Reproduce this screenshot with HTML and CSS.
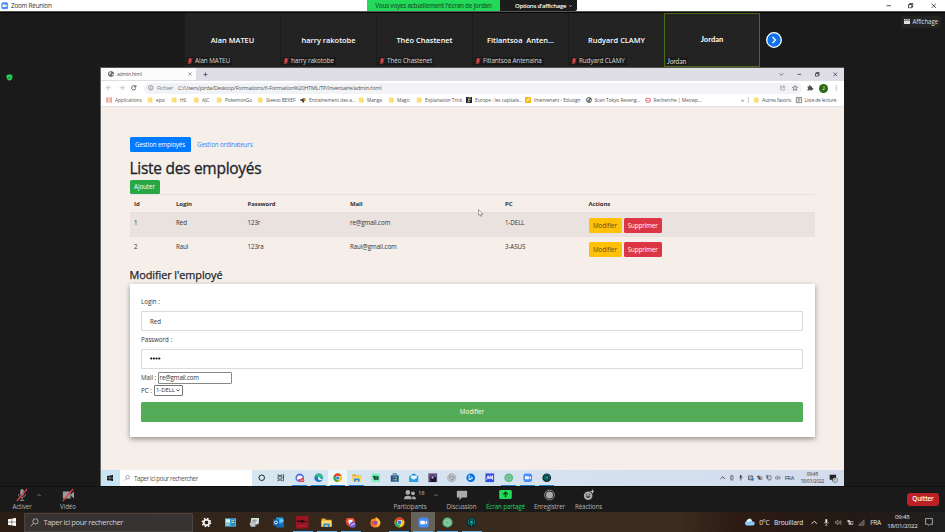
FILE: index.html
```html
<!DOCTYPE html>
<html lang="fr">
<head>
<meta charset="utf-8">
<title>Zoom Réunion</title>
<link rel="stylesheet" href="styles.css">
</head>
<body>
<svg class="defs" aria-hidden="true">
  <symbol id="muted" viewBox="0 0 10 10"><path d="M3.3 1h3.4v5H3.3zM2 5c0 3 6 3 6 0M5 7v2M3 9.3h4" fill="#d94848" stroke="#d94848"/><path d="M9 .5 1.5 9.5" stroke="#e64b4b" stroke-width="1.3"/></symbol>
  <symbol id="folder" viewBox="0 0 10 12"><path d="M.5 1h8v2h1v8H.5z" fill="#fbdf7b"/><path d="M8 3h1.5v8H8z" fill="#efcb59"/></symbol>
  <symbol id="globe" viewBox="0 0 12 12"><circle cx="6" cy="6" r="5.6" fill="#4d5156"/><path d="M2 4l3-2 2 1-1 2-2 1 1 2-1 2M8 5l3 1-2 3-2-1z" fill="#f5f5f5"/></symbol>
  <symbol id="search" viewBox="0 0 12 12"><circle cx="7.3" cy="4.5" r="3.5" fill="none" stroke="currentColor"/><path d="M4.8 7 1 11" stroke="currentColor"/></symbol>
  <symbol id="win" viewBox="0 0 12 12"><path d="M0 1.8 5.5 1v4.6H0zM6.2.9 12 0v5.6H6.2zM0 6.3h5.5v4.8L0 10.3zM6.2 6.3H12V12l-5.8-.8z" fill="currentColor"/></symbol>
  <symbol id="chrome" viewBox="0 0 24 24"><circle cx="12" cy="12" r="11" fill="#fbc116"/><path d="M2.5 6.5 7.4 15 12 7h10A11 11 0 0 0 2.5 6.5" fill="#e33b2e"/><path d="M2.5 6.5 7.7 14.7 15 16 11 23A11 11 0 0 1 2.5 6.5" fill="#2da94f"/><circle cx="12" cy="12" r="5.3" fill="#fff"/><circle cx="12" cy="12" r="4.1" fill="#2f73e0"/></symbol>
  <symbol id="explorer" viewBox="0 0 24 24"><path d="M1 3h8l2 3h12v15H1z" fill="#e9a927"/><path d="M1 8h22v13H1z" fill="#ffd968"/><path d="M5 14h14v8h-4v-4H9v4H5z" fill="#2b8fda"/></symbol>
  <symbol id="zoomapp" viewBox="0 0 24 24"><rect x="1" y="1" width="22" height="22" rx="6" fill="#4a8cff"/><path d="M5 8h8q2 0 2 2v6H7q-2 0-2-2zM16 11l4-3v8l-4-3z" fill="#fff"/></symbol>
  <symbol id="atom" viewBox="0 0 24 24"><circle cx="12" cy="12" r="11" fill="#55b47d"/><g fill="none" stroke="#a9dcbc" stroke-width="1"><ellipse cx="12" cy="12" rx="8.5" ry="3.5" transform="rotate(20 12 12)"/><ellipse cx="12" cy="12" rx="8.5" ry="3.5" transform="rotate(80 12 12)"/><ellipse cx="12" cy="12" rx="8.5" ry="3.5" transform="rotate(140 12 12)"/></g></symbol>
  <symbol id="kraken" viewBox="0 0 24 24"><circle cx="12" cy="12" r="11" fill="#0a2a30"/><path d="M6 16C3 7 8 4 12 4s9 3 6 12M9 17v-4M15 17v-4M12 20v-8" fill="none" stroke="#20a3a0" stroke-width="1.5"/><path d="M9 8h6v5H9z" fill="#20a3a0"/></symbol>
  <symbol id="mic" viewBox="0 0 12 14"><rect x="4" y="0" width="4" height="8" rx="2" fill="currentColor"/><path d="M2 6c0 5 8 5 8 0M6 10v3M3.5 13.3h5" fill="none" stroke="currentColor"/></symbol>
  <symbol id="sound" viewBox="0 0 14 12"><path d="M1 4h2l3-3v10L3 8H1z" fill="none" stroke="currentColor"/><path d="M8 4q1.5 2 0 4M10 2.5q3 3.500 0 7M12 1q4 5 0 10" fill="none" stroke="currentColor"/></symbol>
  <symbol id="up" viewBox="0 0 10 6"><path d="M1 5l4-4 4 4" fill="none" stroke="currentColor" stroke-width="1.5"/></symbol>
  <symbol id="restore" viewBox="0 0 10 10"><path d="M1 3h6v6H1zM3 3V1h6v6H7" fill="none" stroke="currentColor" stroke-width="1.5"/></symbol>
  <symbol id="close" viewBox="0 0 10 10"><path d="M1 1l8 8M9 1 1 9" stroke="currentColor" stroke-width="1.4"/></symbol>
  <symbol id="min" viewBox="0 0 10 10"><path d="M1 5h8" stroke="currentColor" stroke-width="1.4"/></symbol>
  <symbol id="battery" viewBox="0 0 14 12"><path d="M4 4h9v6H4z" fill="none" stroke="currentColor" stroke-width="1.3"/><path d="M1 1h5v4H1zM5 6h4v3H5z" fill="currentColor"/></symbol>
</svg>

<header class="titlebar">
  <svg class="app-logo"><use href="#zoomapp"/></svg>
  <span class="app-name">Zoom Réunion</span>
  <div class="share-note">Vous voyez actuellement l'écran de Jordan</div>
  <div class="share-options"><span>Options d'affichage</span><svg class="chev" viewBox="0 0 10 6"><path d="M1 1l4 4 4-4" fill="none" stroke="#fff" stroke-width="2"/></svg></div>
  <div class="win-controls"><svg><use href="#min"/></svg><svg><use href="#restore"/></svg><svg><use href="#close"/></svg></div>
</header>

<section class="gallery">
  <div class="tile"><b>Alan MATEU</b><span class="tag"><svg><use href="#muted"/></svg>Alan MATEU</span></div>
  <div class="tile"><b>harry rakotobe</b><span class="tag"><svg><use href="#muted"/></svg>harry rakotobe</span></div>
  <div class="tile"><b>Théo Chastenet</b><span class="tag"><svg><use href="#muted"/></svg>Théo Chastenet</span></div>
  <div class="tile"><b>Fitiantsoa&nbsp; Anten...</b><span class="tag"><svg><use href="#muted"/></svg>Fitiantsoa Antenaina</span></div>
  <div class="tile"><b>Rudyard CLAMY</b><span class="tag"><svg><use href="#muted"/></svg>Rudyard CLAMY</span></div>
  <div class="tile active"><b>Jordan</b><span class="tag">Jordan</span></div>
  <svg class="next" viewBox="0 0 16 16"><circle cx="8" cy="8" r="7.3" fill="#0e72ed" stroke="#fff" stroke-width="1.3"/><path d="M6.5 5 9.5 8l-3 3" fill="none" stroke="#fff" stroke-width="1.2"/></svg>
  <div class="view-btn"><svg viewBox="0 0 12 10"><path d="M0 0h3v2H0zM4.5 0h3v2h-3zM9 0h3v2H9zM0 3h12v7H0z" fill="#ddd"/></svg>Affichage</div>
</section>

<main class="stage">
  <aside class="left"><svg viewBox="0 0 12 12"><path d="M6 .5 11 2.300v4Q10.500 10 6 11.700 1.500 10 1 6.300v-4z" fill="#23d959"/><path d="M3.5 6l2 2 3.300-3.800" fill="none" stroke="#163c20" stroke-width="1.3"/></svg></aside>
  <div class="desktop">
    <div class="tabs">
      <div class="tab"><svg><use href="#globe"/></svg><span>admin.html</span><svg class="x"><use href="#close"/></svg></div>
      <svg class="plus" viewBox="0 0 10 10"><path d="M5 1v8M1 5h8" stroke="#444" stroke-width="1.5"/></svg>
      <div class="tab-controls"><svg viewBox="0 0 10 10"><path d="M1 3l4 4 4-4" fill="none" stroke="#333" stroke-width="1.4"/></svg><svg><use href="#min"/></svg><svg><use href="#restore"/></svg><svg><use href="#close"/></svg></div>
    </div>
    <div class="toolbar">
      <svg class="nav" viewBox="0 0 12 12"><path d="M11 6H1M6 1 1 6l5 5" fill="none" stroke="#999" stroke-width="1.3"/></svg>
      <svg class="nav" viewBox="0 0 12 12"><path d="M1 6h10M6 1l5 5-5 5" fill="none" stroke="#999" stroke-width="1.3"/></svg>
      <svg class="nav" viewBox="0 0 12 12"><path d="M10.5 7A4.700 4.700 0 1 1 9 2.500L10 4M10.700.5V4.500H7" fill="none" stroke="#333" stroke-width="1.6"/></svg>
      <div class="url"><svg class="info" viewBox="0 0 12 12"><circle cx="6" cy="6" r="5" fill="none" stroke="#555" stroke-width="1.2"/><path d="M6 5v4M6 2.800V4" stroke="#555" stroke-width="1.3"/></svg><span class="file">Fichier</span><span class="path">C:/Users/jorda/Desktop/Formations/6-Formation%20HTML/TP/Inventaire/admin.html</span>
        <svg class="share" viewBox="0 0 12 12"><path d="M4 2H1.500v9H10V8M4 7q0-4 4-4V1l3 3-3 3V5" fill="none" stroke="#666"/></svg>
        <svg class="star" viewBox="0 0 12 12"><path d="M6 1l1.500 3.400 3.700.3-2.800 2.500.8 3.700L6 9l-3.200 1.900.8-3.700L.8 4.700l3.700-.3z" fill="none" stroke="#444" stroke-width="1.2"/></svg>
      </div>
      <svg class="puzzle" viewBox="0 0 12 12"><path d="M1 3h3a1.700 1.700 0 1 1 3 0h3v3a1.700 1.700 0 1 1 0 3v2H7a1.500 1.500 0 0 0-3 0H1V8a1.500 1.500 0 0 0 0-3z" fill="#4b4f53"/></svg>
      <span class="avatar">J</span>
      <svg class="dots" viewBox="0 0 4 12"><path d="M1.200 1h1.600v1.600H1.200zM1.200 5.200h1.600v1.600H1.200zM1.200 9.400h1.600V11H1.200z" fill="#555"/></svg>
    </div>
    <div class="bookmarks">
      <span class="bm w1"><svg viewBox="0 0 12 12"><path d="M1 1h2.500v10H1z" fill="#e94b3d"/><path d="M5 1h2.500v10H5z" fill="#eda430"/><path d="M9 1h2.500v10H9z" fill="#d95149"/><path d="M0 4h12M0 8h12" stroke="#fff"/></svg>Applications</span>
      <span class="bm w2"><svg><use href="#folder"/></svg>epsi</span>
      <span class="bm w3"><svg><use href="#folder"/></svg>HS</span>
      <span class="bm w4"><svg><use href="#folder"/></svg>AJC</span>
      <span class="bm w5"><svg><use href="#folder"/></svg>PokemonGo</span>
      <span class="bm w6"><svg><use href="#folder"/></svg>Steevo BEKEF</span>
      <span class="bm w7"><svg viewBox="0 0 12 12"><path d="M0 5l5-1 2-2 3 1 2 3-3 1-1 4H5L4 8 0 7z" fill="#493d27"/><path d="M7 4h4v3H7z" fill="#e6ad2b"/></svg>Entraînement des a...</span>
      <span class="bm w8"><svg><use href="#folder"/></svg>Manga</span>
      <span class="bm w9"><svg><use href="#folder"/></svg>Magic</span>
      <span class="bm w10"><svg><use href="#folder"/></svg>Explanation Trick</span>
      <span class="bm w11"><svg viewBox="0 0 12 12"><path d="M0 0h12v12H0z" fill="#182744"/><path d="M10 1Q3 1 5 5t0 6M10 5H4M8 9H3" fill="none" stroke="#d8bd62" stroke-width="1.5"/></svg>Europe : les capitale...</span>
      <span class="bm w12"><svg viewBox="0 0 12 12"><rect width="12" height="12" rx="1" fill="#f8b817"/><path d="M3 9l1-3 4-4 1 2-4 4z" fill="#fff"/></svg>Intervenant - Edusign</span>
      <span class="bm w13"><svg><use href="#globe"/></svg>Scan Tokyo Reveng...</span>
      <span class="bm w14"><svg viewBox="0 0 12 12"><path d="M2 4l1-2 2 1h2l2-1 1 2 1 3q-1 4-5 4T1 7z" fill="#fff" stroke="#e33c46" stroke-width="1.6"/><path d="M3 7h6" stroke="#e33c46"/></svg>Recherche | Meowp...</span>
      <span class="more">»</span>
      <span class="bm w15"><svg><use href="#folder"/></svg>Autres favoris</span>
      <span class="bm w16"><svg viewBox="0 0 12 12"><path d="M.7.7h10.600v10.600H.7zM3 3.500h6M3 6h6M3 8.500h4" fill="none" stroke="#555" stroke-width="1.3"/></svg>Liste de lecture</span>
    </div>

    <div class="page">
      <nav><a class="pill">Gestion employés</a><a class="link">Gestion ordinateurs</a></nav>
      <h1>Liste des employés</h1>
      <button class="btn add">Ajouter</button>
      <table>
        <thead><tr><th class="c1">Id</th><th class="c2">Login</th><th class="c3">Password</th><th class="c4">Mail</th><th class="c5">PC</th><th>Actions</th></tr></thead>
        <tbody>
          <tr><td>1</td><td>Red</td><td>123r</td><td>re@gmail.com</td><td>1-DELL</td><td><div class="acts"><button class="btn edit">Modifier</button><button class="btn del">Supprimer</button></div></td></tr>
          <tr><td>2</td><td>Raul</td><td>123ra</td><td>Raul@gmail.com</td><td>3-ASUS</td><td><div class="acts"><button class="btn edit">Modifier</button><button class="btn del">Supprimer</button></div></td></tr>
        </tbody>
      </table>
      <h2>Modifier l'employé</h2>
      <form class="card">
        <label>Login :</label>
        <div class="field">Red</div>
        <label>Password :</label>
        <div class="field pw"><svg viewBox="0 0 11 3"><circle cx="1.2" cy="1.500" r="1.100"/><circle cx="3.900" cy="1.500" r="1.100"/><circle cx="6.600" cy="1.500" r="1.100"/><circle cx="9.300" cy="1.500" r="1.100"/></svg></div>
        <div class="line mail"><span>Mail :</span><div class="mini">re@gmail.com</div></div>
        <div class="line pc"><span>PC :</span><div class="select">1-DELL<svg viewBox="0 0 10 6"><path d="M1 1l4 4 4-4" fill="none" stroke="#222" stroke-width="2"/></svg></div></div>
        <div class="submit">Modifier</div>
      </form>
      <svg class="cursor" viewBox="0 0 10 16"><path d="M1 1v12l3-3 2 5 2-1-2-4h3.500z" fill="#fff" stroke="#555"/></svg>
    </div>

    <div class="taskbar inner">
      <div class="start"><svg><use href="#win"/></svg></div>
      <div class="find"><svg><use href="#search"/></svg>Taper ici pour rechercher</div>
      <div class="icons">
        <i><svg viewBox="0 0 24 24"><circle cx="12" cy="12" r="7" fill="none" stroke="#222" stroke-width="2.5"/></svg></i>
        <i><svg viewBox="0 0 24 24"><path d="M5 3v3h10V3M5 21v-3h10v3M5 9h10v6H5zM19 3v18M17 10h4" fill="none" stroke="#333" stroke-width="1.8"/></svg></i>
        <i class="on"><svg viewBox="0 0 24 24"><circle cx="12" cy="12" r="11" fill="#6571d8"/><path d="M5 16q0-9 4-9h6q4 0 4 9l-4 1-1-2h-4l-1 2z" fill="#fff"/><circle cx="18" cy="18" r="5.5" fill="#ef4050"/><circle cx="18" cy="18" r="1.7" fill="#fff"/></svg></i>
        <i class="on"><svg viewBox="0 0 24 24"><circle cx="12" cy="12" r="11" fill="#1a77c9"/><path d="M2 8Q8-2 18 3q6 4 5 11H11q0-6-9-6" fill="#35bd91"/><path d="M10 11q4-3 6 3 3 3 7-1-1 6-9 5-5-1-4-7" fill="#e1f5fa"/></svg></i>
        <i class="on sel"><svg><use href="#chrome"/></svg></i>
        <i class="on"><svg><use href="#explorer"/></svg></i>
        <i><svg viewBox="0 0 24 24"><rect x="1" y="1" width="22" height="22" rx="4" fill="#7df0c0"/><path d="M4 8l4-2 2 2h9v9H7v-5z" fill="#173c32"/><circle cx="13" cy="12.500" r="1.500" fill="#7df0c0"/></svg></i>
        <i><svg viewBox="0 0 24 24"><path d="M2 6h20v16H2z" fill="#16548b"/><path d="M8 6V2h8v4" fill="none" stroke="#16548b" stroke-width="2"/><path d="M7 9h4v4H7z" fill="#ef6b4d"/><path d="M13 9h4v4h-4z" fill="#8cc757"/><path d="M7 15h4v4H7z" fill="#43b5ed"/><path d="M13 15h4v4h-4z" fill="#f5c84a"/></svg></i>
        <i><svg viewBox="0 0 24 24"><path d="M1 8 12 1l11 7v14H1z" fill="#1079c4"/><path d="M4 6h16v7l-8 5-8-5z" fill="#e8f5ff"/><path d="M1 10l11 7 11-7v12H1z" fill="#27a2e5"/></svg></i>
        <i><svg viewBox="0 0 24 24"><path d="M1 1h22v22H1z" fill="#5b4878"/><path d="M4 23l2-12 5-6 4 5 6 1-2 12z" fill="#19162c"/><path d="M10 7l5 3-2 5-5-2z" fill="#a59cc6"/><path d="M3 3l4 4M16 3l5 7M3 15l4 6" stroke="#9165ad" stroke-width="2"/></svg></i>
        <i><svg viewBox="0 0 24 24"><circle cx="12" cy="12" r="10.5" fill="#c0c3ca" stroke="#848995"/><path d="M5 8l5-3 5 4 5-1-3 9-6 2-4-5z" fill="#9a9da6"/><path d="M9 9l5 3-3 4z" fill="#eee"/></svg></i>
        <i><svg viewBox="0 0 24 24"><circle cx="12" cy="12" r="11" fill="#0873dc"/><path d="M8 5v12l9-4-5-4M8 17l5-3" fill="none" stroke="#fff" stroke-width="2.3"/></svg></i>
        <i><svg viewBox="0 0 24 24"><path d="M1 1h22v22H1z" fill="#394ee5"/><path d="M4 17 8 7l2 8 4-8 1 8 4-8v10" fill="none" stroke="#fff" stroke-width="2.2"/></svg></i>
        <i class="on"><svg><use href="#atom"/></svg></i>
        <i class="on"><svg><use href="#zoomapp"/></svg></i>
        <i class="on"><svg><use href="#kraken"/></svg></i>
      </div>
      <div class="tray">
        <svg><use href="#up"/></svg>
        <svg viewBox="0 0 12 12"><path d="M3 3h6v6H3zM3 1h6M3 11h6M6 5v3" fill="none" stroke="#333"/></svg>
        <svg><use href="#mic"/></svg>
        <svg viewBox="0 0 12 12"><path d="M1 2h9v8H1zM3 8l5-5" fill="none" stroke="#333" stroke-width="1.4"/><path d="M7 7h5v5H7z" fill="#2673c9"/></svg>
        <svg><use href="#battery"/></svg>
        <svg viewBox="0 0 12 12"><path d="M3 2h8v7H3zM1 1h3v5H1zM5 11h5" fill="none" stroke="#333"/></svg>
        <svg><use href="#sound"/></svg>
        <span class="fra">FRA</span>
        <div class="clock"><span>09:45</span><span>18/01/2022</span></div>
        <svg class="notif" viewBox="0 0 14 14"><path d="M1 1h10v8H7l-2 3V9H1z" fill="#222"/><circle cx="9.5" cy="9.500" r="3.800" fill="#e8edf5" stroke="#555"/><path d="M9.500 7.500v4M8.500 8.500l1-1" stroke="#333"/></svg>
      </div>
    </div>
  </div>
</main>

<footer class="zoombar">
  <div class="tool t1"><svg viewBox="0 0 14 14"><g transform="translate(1)" color="#9a9a9a"><use href="#mic" width="12" height="14"/></g><path d="M13 0 1 14" stroke="#e23b40" stroke-width="1.4"/></svg><span>Activer</span></div>
  <svg class="caret"><use href="#up"/></svg>
  <div class="tool t2"><svg viewBox="0 0 14 14"><path d="M1 3h8q1 0 1 1v7H1zM10.500 6 14 3v8l-3.500-3z" fill="#9a9a9a"/><path d="M13 0 1 14" stroke="#e23b40" stroke-width="1.4"/></svg><span>Vidéo</span></div>
  <div class="tool t3"><svg viewBox="0 0 14 14"><circle cx="4.5" cy="4" r="2.700" fill="#aaa"/><circle cx="10.500" cy="5" r="2.200" fill="#aaa"/><path d="M0 12q0-4 4.500-4T9 12zM9 9q5-1.500 5 3h-4z" fill="#aaa"/></svg><em>18</em><span>Participants</span></div>
  <svg class="caret c2"><use href="#up"/></svg>
  <div class="tool t4"><svg viewBox="0 0 14 14"><path d="M2 2h10q1 0 1 1v6q0 1-1 1H7l-3 3v-3H2q-1 0-1-1V3q0-1 1-1" fill="#aaa"/></svg><span>Discussion</span></div>
  <div class="tool t5"><svg viewBox="0 0 14 10"><rect width="14" height="10" rx="1.5" fill="#23d959"/><path d="M7 8V3M4.500 5 7 2.500 9.500 5" fill="none" stroke="#173d20" stroke-width="1.5"/></svg><span>Écran partagé</span></div>
  <div class="tool t6"><svg viewBox="0 0 14 14"><circle cx="7" cy="7" r="6.2" fill="none" stroke="#aaa"/><circle cx="7" cy="7" r="4.5" fill="#aaa"/></svg><span>Enregistrer</span></div>
  <div class="tool t7"><svg viewBox="0 0 14 14"><circle cx="6.5" cy="8" r="5.500" fill="#aaa"/><path d="M4 8.500q2.500 4 5 0zM4.500 5.500v1.500M8.500 5.500v1.500" fill="none" stroke="#222"/><path d="M12 0v5M9.500 2.500h4.500" stroke="#bbb" stroke-width="1.3"/></svg><span>Réactions</span></div>
  <div class="quit">Quitter</div>
</footer>

<div class="taskbar outer">
  <div class="start"><svg><use href="#win"/></svg></div>
  <div class="find"><svg><use href="#search"/></svg>Taper ici pour rechercher</div>
  <div class="icons">
    <i><svg viewBox="0 0 24 24"><circle cx="12" cy="12" r="6" fill="none" stroke="#fff" stroke-width="3.5"/><circle cx="12" cy="12" r="9" fill="none" stroke="#fff" stroke-width="3" stroke-dasharray="3.6 3.470"/></svg></i>
    <i><svg viewBox="0 0 24 24"><path d="M0 3h24v18H0z" fill="#55b8e7"/><path d="M2 5h9v7H2z" fill="#d8f0fa"/><path d="M12 5h10v14H12z" fill="#2387c4"/><path d="M14 8h6M14 12h6M3 16h7" stroke="#f4dd66" stroke-width="2"/></svg></i>
    <i><svg viewBox="0 0 24 24"><path d="M5 2h17l-1 14H3z" fill="#dbe3e5"/><path d="M1 13h13v8H4z" fill="#bdc7ca"/><path d="M7 7h10M6 11h9M14 20l6-6" stroke="#67777c" stroke-width="2"/></svg></i>
    <i><svg viewBox="0 0 24 24"><path d="M7 1h15v17H7z" fill="#27a2df"/><path d="M14 5h9v6h-9z" fill="#67c5ef"/><path d="M9 12l7 4 8-5v12H7z" fill="#1768ac"/><path d="M0 5h13v14H0z" fill="#0c61b2"/><circle cx="6.5" cy="12" r="3.200" fill="none" stroke="#fff" stroke-width="2"/></svg></i>
    <i class="on"><svg class="big" viewBox="0 0 24 24"><path d="M0 0h24v24H0z" fill="#981523"/><path d="M1 8l7 1 4-2 5 3 6 1-7 1-4 1-4-2-4 1z" fill="#210c11"/><path d="M3 19h16" stroke="#bb2732" stroke-width="2"/></svg></i>
    <i class="on"><svg><use href="#explorer"/></svg></i>
    <i class="on"><svg viewBox="0 0 24 24"><path d="M4 2h14l4 6-2 9-8 6-8-6L1 8z" fill="#eb4a31"/><path d="M7 6h10l-2 7-3 5-4-5z" fill="#fff"/><circle cx="17" cy="17" r="6.5" fill="#7660d7"/><path d="M13 18l8-4" stroke="#ead8ff" stroke-width="2"/></svg></i>
    <i><svg viewBox="0 0 24 24"><path d="M4 5q2-4 3 0 6-3 6-5 9 5 10 12 0 11-11 11T1 12q0-4 3-7" fill="#ff8425"/><path d="M14 1q8 5 8 12-2 7-8 7 5-8-1-13z" fill="#ffca3c"/><circle cx="12" cy="12.500" r="4.500" fill="#8b46cd"/><path d="M3 10q5-2 8 1l-3 3q-1 3 3 5-8 1-8-9" fill="#f64b36"/></svg></i>
    <i class="on"><svg><use href="#chrome"/></svg></i>
    <i class="on sel"><svg><use href="#zoomapp"/></svg></i>
    <i class="on"><svg><use href="#atom"/></svg></i>
    <i class="on"><svg><use href="#kraken"/></svg></i>
  </div>
  <div class="weather"><svg viewBox="0 0 14 10"><path d="M3 9.500a3 3 0 0 1 0-5.500Q5 0 8 1q2 1 2 3 4 0 3.500 3.500-.5 2-2.500 2z" fill="#8cc9f2"/><path d="M3 4q2-4 5-3 2 1 2 3-3-1-4 1-2-1-3-1" fill="#e8f6ff"/></svg><span>0°C</span><span>Brouillard</span></div>
  <div class="tray">
    <svg><use href="#up"/></svg><svg><use href="#mic"/></svg><svg><use href="#sound"/></svg><svg><use href="#battery"/></svg>
    <svg viewBox="0 0 12 12"><path d="M11 1v10H1zM4 11q0-4 7-6M7 11q0-2 4-3" fill="none" stroke="#aaa"/></svg>
    <span class="fra">FRA</span>
    <div class="clock"><span>09:45</span><span>18/01/2022</span></div>
    <svg class="notif" viewBox="0 0 14 14"><path d="M1 1h12v10H9l-2 2-2-2H1z" fill="none" stroke="#ddd" stroke-width="1.2"/></svg>
  </div>
</div>
</body>
</html>
```
FILE: styles.css
```css
* { box-sizing: border-box; }
body { margin: 0; width: 945px; height: 532px; overflow: hidden; display: flex; flex-direction: column; background: #1a1a1a; font-family: "Open Sans", "Noto Sans", sans-serif; font-size: 6.2px; color: #222; }
svg { display: block; flex: none; overflow: visible; }
.defs { width: 0; height: 0; position: absolute; }
span, b, a { white-space: nowrap; }

.titlebar { flex: none; height: 12px; background: #fff; border-bottom: 1px solid #555; display: grid; grid-template-columns: 11px 356px 133px 77px 1fr; align-items: center; }
.app-logo { width: 7.5px; height: 7.5px; margin-left: 1px; }
.app-name { font-size: 6.4px; letter-spacing: -.26px; color: #333; }
.share-note { height: 11px; line-height: 11px; background: #23d959; color: #17612d; font-size: 6.2px; font-weight: 600; letter-spacing: -.24px; text-align: center; white-space: nowrap; }
.share-options { height: 11px; display: flex; gap: 3px; align-items: center; padding-left: 15px; background: #1c1c1c; color: #fff; font-weight: 600; font-size: 6px; letter-spacing: -.26px; border-radius: 0 0 2px 0; }
.chev { width: 3px; height: 2px; }
.win-controls { display: flex; justify-content: flex-end; gap: 17px; padding-right: 9px; }
.win-controls svg { width: 5.5px; height: 5.5px; }

.gallery { flex: none; height: 55px; border-top: 1px solid #050505; padding-left: 185px; display: flex; background: #1a1a1a; }
.tile { width: 96px; height: 54px; background: #232323; border-right: 1px solid #1b1b1b; display: grid; place-items: center; position: relative; color: #fff; padding-bottom: 1px; }
.tile b { font-size: 7.4px; font-weight: 600; letter-spacing: .02px; }
.tile.active { margin-left: -1px; border: 1px solid #4b6b14; }
.tile.active b { font-family: Lato, sans-serif; font-weight: 700; font-size: 7.5px; }
.tag { position: absolute; left: 1px; bottom: 1.5px; height: 8.5px; line-height: 8.5px; display: flex; align-items: center; gap: 2px; padding: 0 2px 0 1px; font-size: 6.3px; letter-spacing: -.07px; color: #d8d8d8; background: #1b1b1b; }
.active .tag { bottom: 1px; font-family: Lato, sans-serif; font-size: 6.7px; }
.tag svg { width: 6px; height: 6px; }
.next { width: 16px; height: 16px; margin: 18.5px 0 0 6px; }
.view-btn { margin: 2.5px 4px 0 auto; height: 12px; padding: 0 3px; background: #242424; border-radius: 3px; display: flex; gap: 2px; align-items: center; font-size: 6.2px; letter-spacing: -.12px; color: #ddd; }
.view-btn svg { width: 6px; height: 5px; }

.stage { flex: none; height: 419px; display: flex; }
.left { width: 101px; padding: 7px 0 0 6px; border-right: 1px solid #666; }
.left svg { width: 7px; height: 7px; }
.desktop { width: 743px; display: flex; flex-direction: column; background: #fff; border-top: 1px solid #555; }
.tabs { height: 13px; background: #dfdee6; display: flex; align-items: center; padding-bottom: 1px; }
.tab { width: 95px; height: 12px; padding: 0 4px 0 7px; background: #fcfcfd; display: flex; gap: 3px; align-items: center; font-size: 5px; letter-spacing: -.2px; color: #555; }
.tab svg { width: 6px; height: 6px; }
.tab .x { width: 4px; height: 4px; margin-left: auto; }
.plus { width: 5px; height: 5px; margin-left: 6.5px; }
.tab-controls { margin-left: auto; display: flex; gap: 13.2px; padding-right: 6.5px; }
.tab-controls svg { width: 4.7px; height: 4.7px; }
.toolbar { height: 14px; display: flex; align-items: center; padding-left: 5px; background: #fff; }
.nav { width: 5.5px; height: 5.5px; margin-right: 7px; }
.url { width: 658.5px; height: 11px; border-radius: 6px; background: #f2f3f6; display: flex; align-items: center; padding-left: 4px; font-size: 5.5px; color: #555; }
.info { width: 5.5px; height: 5.5px; margin-right: 4px; }
.file { width: 21px; letter-spacing: -.1px; color: #777; }
.path { letter-spacing: -.195px; }
.share { width: 5.5px; height: 5.5px; margin-left: auto; }
.star { width: 6px; height: 6px; margin: 0 4px 0 7px; }
.puzzle { width: 6px; height: 6px; margin-left: 5px; }
.avatar { width: 9px; height: 9px; text-align: center; color: #fff; background: #286b18; border-radius: 50%; margin-left: 6px; font: 5px/9px Lato, sans-serif; }
.dots { width: 2.5px; height: 6px; margin-left: 7px; }
.bookmarks { height: 12px; display: flex; align-items: center; padding: 0 0 1px 5px; border-bottom: 1px solid #e4e1e2; font-size: 4.8px; letter-spacing: -.06px; color: #555; }
.bm { display: flex; align-items: center; gap: 3px; flex: none; }
.bm svg { width: 6px; height: 6px; }
.w1 { width: 41px; } .w2 { width: 24px; } .w3 { width: 22px; } .w4 { width: 23px; } .w5 { width: 41px; } .w6 { width: 43px; } .w7 { width: 58px; }
.w8 { width: 30px; } .w9 { width: 28px; } .w10 { width: 50px; } .w11 { width: 59px; } .w12 { width: 60.5px; } .w13 { width: 59px; } .w14 { width: 96.5px; }
.w7, .w11, .w13, .w14 { letter-spacing: -.04px; }
.more { width: 7px; font-size: 6px; }
.w15 { width: 47.5px; padding-left: 4px; border-left: 1px solid #ccc; letter-spacing: -.12px; }
.w16 { letter-spacing: -.14px; }

.page { height: 363px; background: #f5eee9; padding: 29.5px 29px 0 28.5px; position: relative; color: #333; }
nav { display: flex; align-items: center; height: 15.5px; }
.pill { width: 61px; height: 15.5px; line-height: 15.5px; background: #007bff; color: #fff; border-radius: 1.5px; text-align: center; letter-spacing: -.1px; }
.link { color: #2f8bf8; margin-left: 6.5px; letter-spacing: -.11px; }
h1 { margin: 5.5px 0 0; height: 22px; line-height: 20px; font-size: 15.5px; font-weight: 500; letter-spacing: -.28px; color: #212529; white-space: nowrap; -webkit-text-stroke: .3px #212529; }
.btn { display: block; border: 0; padding: 0; height: 14.5px; border-radius: 1.5px; color: #fff; font: 6.2px "Open Sans", "Noto Sans", sans-serif; letter-spacing: -.04px; text-align: center; }
.add { width: 30px; background: #28a745; }
table { width: 685.5px; border-collapse: collapse; table-layout: fixed; border-top: 1px solid #e5e3e2; }
th, td { text-align: left; padding: 0 0 0 4.5px; vertical-align: top; line-height: 9px; letter-spacing: -.08px; }
th { height: 18px; padding-top: 5px; font-weight: 700; font-size: 6px; border-bottom: 1px solid #e2dfdd; }
td { height: 24.5px; padding-top: 5px; }
.c1 { width: 42px; } .c2 { width: 71.5px; } .c3 { width: 102.5px; } .c4 { width: 155px; } .c5 { width: 83.5px; }
tbody tr:first-child { background: #e9e2de; }
.acts { display: flex; gap: 2px; }
.edit { width: 33px; background: #ffc107; color: #5b4a17; }
.del { width: 38.5px; background: #dc3545; }
h2 { margin: 4px 0 0; height: 18px; line-height: 17px; font-size: 10.9px; font-weight: 500; letter-spacing: -.08px; color: #212529; white-space: nowrap; -webkit-text-stroke: .25px #212529; }
.card { width: 685.5px; height: 153px; background: #fff; padding: 12px 12px 0 11.5px; box-shadow: 0 2px 5px rgba(60, 50, 45, .5); }
label { display: block; height: 15px; line-height: 11px; }
.field { height: 20px; border: 1px solid #dcdcdc; padding-left: 8px; line-height: 19px; margin-bottom: 3px; }
.pw { display: flex; align-items: center; }
.pw svg { width: 11px; height: 3px; fill: #111; }
.line { display: flex; align-items: center; height: 12px; }
.line span { letter-spacing: -.03px; }
.mail span { width: 16.5px; }
.pc span { width: 12.5px; }
.mini { width: 74px; height: 12px; line-height: 10px; border: 1px solid #888; padding-left: 1px; border-radius: 1px; letter-spacing: -.15px; }
.pc { height: 13.5px; }
.select { width: 29px; height: 10.5px; line-height: 8.5px; border: 1px solid #777; border-radius: 1px; padding: 0 1.5px; font-size: 6px; letter-spacing: -.1px; display: flex; align-items: center; justify-content: space-between; }
.select svg { width: 4px; height: 2.4px; }
.submit { height: 20px; line-height: 20px; margin-top: 4.5px; background: #53ac57; border-radius: 1.5px; color: #fff; text-align: center; }
.cursor { position: absolute; left: 377px; top: 102px; width: 5px; height: 8px; }

.taskbar { display: flex; align-items: center; }
.taskbar .find { display: flex; align-items: center; white-space: nowrap; }
.icons { display: flex; height: 100%; }
.icons i { display: flex; align-items: center; justify-content: center; position: relative; }
.icons i.on::after { content: ""; position: absolute; left: 2px; right: 2px; bottom: 0; height: 1px; background: #67b5ee; }
.clock { display: flex; flex-direction: column; align-items: center; }
.inner { height: 16px; background: linear-gradient(90deg, #d5e9f3, #d6e2f0 60%, #d3dced); }
.inner .start { width: 18.5px; height: 16px; background: #c9e4f2; display: grid; place-items: center; color: #111; }
.inner .start svg { width: 6px; height: 6px; }
.inner .find { width: 132.5px; height: 16px; background: #fff; padding-left: 4px; gap: 4.5px; font-size: 6.2px; letter-spacing: -.36px; color: #555; }
.inner .find svg { width: 6px; height: 6px; }
.inner .icons i { width: 19px; }
.inner .icons svg { width: 9.5px; height: 9.5px; }
.inner .icons .sel { background: #f0f7fb; }
.inner .icons i.on::after { background: #2682cf; }
.inner .tray { margin-left: auto; display: flex; align-items: center; gap: 3.7px; padding-right: 6px; color: #333; font-size: 4.8px; }
.inner .tray svg { width: 5.6px; height: 5.6px; }
.inner .fra { width: 12px; font-size: 5.7px; letter-spacing: -.2px; }
.inner .clock { line-height: 7px; width: 24px; letter-spacing: -.2px; }
.inner .tray .notif { width: 9px; height: 9px; margin-left: 1px; }

.zoombar { flex: none; height: 26px; display: flex; background: #1a1a1a; color: #b5b5b5; font-size: 6.2px; border-top: 1px solid #101010; }
.tool { display: flex; flex-direction: column; align-items: center; padding-top: 1.5px; position: relative; letter-spacing: -.08px; }
.tool svg { width: 12px; height: 12px; }
.tool span { line-height: 9px; margin-top: 1px; }
.tool em { position: absolute; left: 24px; top: 3px; font-style: normal; font-size: 6px; line-height: 7px; }
.t1 { width: 34px; margin-left: 5px; }
.caret { width: 4px; height: 2.4px; margin-top: 7px; margin-left: -2px; }
.t2 { width: 34px; margin-left: 10px; }
.t3 { width: 32px; margin-left: 309px; }
.c2 { margin-left: 8px; }
.t4 { width: 36px; margin-left: 5.5px; }
.t5 { width: 44px; margin-left: 4px; color: #23d959; }
.tool.t5 svg { width: 13px; height: 9px; margin: 1.5px 0; }
.t6 { width: 36px; margin-left: 4px; }
.t7 { width: 34px; margin-left: 4px; }
.tool.t6 svg, .tool.t7 svg { width: 11px; height: 12px; }
.quit { margin: 6px 6px 0 auto; width: 32px; height: 13px; line-height: 12.5px; background: #b92126; border-radius: 3px; color: #fff; text-align: center; font-size: 6.3px; font-weight: 600; letter-spacing: -.1px; }

.outer { flex: none; height: 20px; background: linear-gradient(90deg, #2c1d14, #35271b 30%, #3a2c1e 62%, #392b20 72%, #2b1b13 78%, #241914 90%, #202020); color: #e5e5e5; }
.outer .start { width: 24px; height: 20px; display: grid; place-items: center; color: #fff; }
.outer .start svg { width: 8px; height: 8px; }
.outer .find { width: 169px; height: 19px; background: #363332; border: 1px solid #484544; padding-left: 5px; gap: 4.5px; color: #d0d0d0; font-size: 7.6px; letter-spacing: -.4px; }
.outer .find svg { width: 9px; height: 9px; }
.outer .icons { margin-left: 1px; }
.outer .icons i { width: 24.15px; }
.outer .icons svg { width: 11px; height: 11px; }
.outer .icons svg.big { width: 12.5px; height: 12.5px; }
.outer .icons .sel { background: #66615b; }
.weather { margin-left: auto; display: flex; align-items: center; gap: 4.5px; font-size: 6.6px; letter-spacing: -.12px; }
.weather svg { width: 11px; height: 8px; }
.outer .tray { display: flex; align-items: center; gap: 5.2px; margin-left: 8px; padding-right: 12.5px; }
.outer .tray svg { width: 6.6px; height: 7px; }
.outer .fra { width: 13px; font-size: 6.5px; letter-spacing: -.2px; }
.outer .clock { width: 28px; line-height: 8.8px; font-size: 6.1px; letter-spacing: -.2px; }
.outer .tray .notif { width: 8px; height: 8px; margin-left: 3px; }
```
